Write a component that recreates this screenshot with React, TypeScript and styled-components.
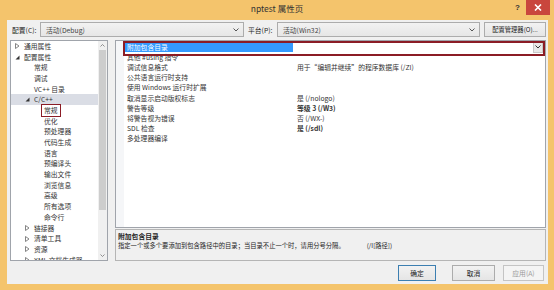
import styled, { createGlobalStyle } from 'styled-components';

const GlobalStyle = createGlobalStyle`
  html, body {
    margin: 0;
    padding: 0;
    background: #f4c46c;
  }
  body {
    font-family: "Noto Sans CJK SC", "Liberation Sans", sans-serif;
    color: #1e1e1e;
  }
`;

type TreeItem = {
  label: string;
  level: number;
  arrow?: 'open' | 'closed';
  active?: boolean;
  boxed?: boolean;
};

const TREE: TreeItem[] = [
  { label: '通用属性', level: 0, arrow: 'closed' },
  { label: '配置属性', level: 0, arrow: 'open' },
  { label: '常规', level: 1 },
  { label: '调试', level: 1 },
  { label: 'VC++ 目录', level: 1 },
  { label: 'C/C++', level: 1, arrow: 'open', active: true },
  { label: '常规', level: 2, boxed: true },
  { label: '优化', level: 2 },
  { label: '预处理器', level: 2 },
  { label: '代码生成', level: 2 },
  { label: '语言', level: 2 },
  { label: '预编译头', level: 2 },
  { label: '输出文件', level: 2 },
  { label: '浏览信息', level: 2 },
  { label: '高级', level: 2 },
  { label: '所有选项', level: 2 },
  { label: '命令行', level: 2 },
  { label: '链接器', level: 1, arrow: 'closed' },
  { label: '清单工具', level: 1, arrow: 'closed' },
  { label: '资源', level: 1, arrow: 'closed' },
  { label: 'XML 文档生成器', level: 1, arrow: 'closed' },
];

const PROPS: { name: string; value: string; bold?: boolean }[] = [
  { name: '附加包含目录', value: '' },
  { name: '其他 #using 指令', value: '' },
  { name: '调试信息格式', value: '用于“编辑并继续”的程序数据库 (/ZI)' },
  { name: '公共语言运行时支持', value: '' },
  { name: '使用 Windows 运行时扩展', value: '' },
  { name: '取消显示启动版权标志', value: '是 (/nologo)' },
  { name: '警告等级', value: '等级 3 (/W3)', bold: true },
  { name: '将警告视为错误', value: '否 (/WX-)' },
  { name: 'SDL 检查', value: '是 (/sdl)', bold: true },
  { name: '多处理器编译', value: '' },
];

function Chevron({ color = '#555' }: { color?: string }) {
  return (
    <svg width="6" height="4" viewBox="0 0 6 4">
      <path d="M0.5 0.5 L3 3 L5.5 0.5" fill="none" stroke={color} strokeWidth="1" />
    </svg>
  );
}

function TreeArrow({ kind }: { kind: 'open' | 'closed' }) {
  if (kind === 'open') {
    return (
      <svg width="5" height="5" viewBox="0 0 5 5">
        <path d="M4.5 0.5 L4.5 4.5 L0.5 4.5 Z" fill="#333" />
      </svg>
    );
  }
  return (
    <svg width="5" height="6" viewBox="0 0 5 6">
      <path d="M0.5 0.5 L4 3 L0.5 5.5 Z" fill="none" stroke="#777" strokeWidth="0.9" />
    </svg>
  );
}

export default function App() {
  return (
    <Frame>
      <GlobalStyle />
      <TitleBar>
        <span />
        <Title>nptest 属性页</Title>
        <TitleControls>
          <HelpMark>?</HelpMark>
          <CloseButton>
            <svg width="8" height="7" viewBox="0 0 8 7">
              <path d="M1 0.5 L7 6.5 M7 0.5 L1 6.5" stroke="#fff" strokeWidth="1.6" />
            </svg>
          </CloseButton>
        </TitleControls>
      </TitleBar>

      <Client>
        <ConfigRow>
          <FieldLabel $width={28}>配置(C):</FieldLabel>
          <Combo $width={204}>
            <span>活动(Debug)</span>
            <Chevron />
          </Combo>
          <FieldLabel $width={29} style={{ marginLeft: 4 }}>
            平台(P):
          </FieldLabel>
          <Combo $width={203}>
            <span>活动(Win32)</span>
            <Chevron />
          </Combo>
          <ManagerButton>配置管理器(O)...</ManagerButton>
        </ConfigRow>

        <Main>
          <TreePanel>
            <TreeList>
              {TREE.map((item, i) => (
                <TreeRow key={i} $level={item.level} $active={item.active}>
                  <ArrowSlot>{item.arrow && <TreeArrow kind={item.arrow} />}</ArrowSlot>
                  <TreeLabel $boxed={item.boxed}>{item.label}</TreeLabel>
                </TreeRow>
              ))}
            </TreeList>
            <ScrollBar>
              <ScrollArrow>
                <svg width="5" height="3" viewBox="0 0 5 3">
                  <path d="M0.5 2.5 L2.5 0.5 L4.5 2.5" fill="none" stroke="#777" strokeWidth="0.8" />
                </svg>
              </ScrollArrow>
              <ScrollTrack>
                <ScrollThumb />
              </ScrollTrack>
              <ScrollArrow>
                <svg width="5" height="3" viewBox="0 0 5 3">
                  <path d="M0.5 0.5 L2.5 2.5 L4.5 0.5" fill="none" stroke="#777" strokeWidth="0.8" />
                </svg>
              </ScrollArrow>
            </ScrollBar>
          </TreePanel>

          <RightColumn>
            <PropGrid>
              <Gutter />
              <PropRows>
                {PROPS.map((p, i) => (
                  <PropRow key={i}>
                    <PropName $selected={i === 0}>{p.name}</PropName>
                    <PropValue $bold={p.bold}>
                      {p.value}
                      {i === 0 && (
                        <DropButton>
                          <Chevron color="#333" />
                        </DropButton>
                      )}
                    </PropValue>
                  </PropRow>
                ))}
              </PropRows>
              <Highlight />
            </PropGrid>
            <DescPane>
              <DescTitle>附加包含目录</DescTitle>
              <DescText>
                <span>指定一个或多个要添加到包含路径中的目录；当目录不止一个时，请用分号分隔。</span>
                <DescSwitch>(/I[路径])</DescSwitch>
              </DescText>
            </DescPane>
          </RightColumn>
        </Main>

        <Footer>
          <DialogButton $width={38} $default>
            确定
          </DialogButton>
          <DialogButton $width={43} style={{ marginLeft: 16 }}>
            取消
          </DialogButton>
          <DialogButton $width={41} $disabled style={{ marginLeft: 8 }}>
            应用(A)
          </DialogButton>
        </Footer>
      </Client>
    </Frame>
  );
}

const Frame = styled.div`
  width: 554px;
  height: 290px;
  background: #f4c46c;
  display: flex;
  flex-direction: column;
  overflow: hidden;
`;

const TitleBar = styled.div`
  height: 20px;
  display: grid;
  grid-template-columns: 1fr auto 1fr;
  align-items: start;
`;

const Title = styled.div`
  font-size: 8.5px;
  line-height: 16px;
  color: #333;
`;

const TitleControls = styled.div`
  justify-self: end;
  display: flex;
  align-items: flex-start;
  margin-right: 4px;
`;

const HelpMark = styled.div`
  font-family: "Liberation Sans", sans-serif;
  font-size: 8px;
  font-weight: bold;
  color: #333;
  line-height: 15px;
  margin-right: 6px;
`;

const CloseButton = styled.div`
  width: 24px;
  height: 15px;
  background: #c9463d;
  display: flex;
  align-items: center;
  justify-content: center;
`;

const Client = styled.div`
  flex: 1;
  margin: 0 6px 6px 7px;
  background: #f0f0f0;
  display: flex;
  flex-direction: column;
  font-size: 6.8px;
`;

const ConfigRow = styled.div`
  height: 17px;
  margin-top: 1px;
  padding-left: 5px;
  display: flex;
  align-items: center;
`;

const FieldLabel = styled.span<{ $width: number }>`
  width: ${(p) => p.$width}px;
  flex-shrink: 0;
`;

const Combo = styled.div<{ $width: number }>`
  width: ${(p) => p.$width}px;
  height: 15px;
  box-sizing: border-box;
  border: 1px solid #acacac;
  background: linear-gradient(#f2f2f2, #e6e6e6);
  display: flex;
  align-items: center;
  justify-content: space-between;
  padding: 0 4px 0 5px;
  color: #444;
`;

const ManagerButton = styled.div`
  margin-left: 4px;
  width: 62px;
  height: 15px;
  box-sizing: border-box;
  border: 1px solid #acacac;
  background: linear-gradient(#f2f2f2, #e5e5e5);
  display: flex;
  align-items: center;
  justify-content: center;
  white-space: nowrap;
  overflow: hidden;
  font-size: 6.3px;
`;

const Main = styled.div`
  height: 221px;
  margin-top: 2px;
  display: flex;
  padding: 0 2px 0 3px;
  gap: 7px;
`;

const TreePanel = styled.div`
  width: 98px;
  box-sizing: border-box;
  border: 1px solid #a0a4ab;
  background: #fff;
  display: flex;
  overflow: hidden;
`;

const TreeList = styled.div`
  flex: 1;
  overflow: hidden;
  padding-top: 0;
`;

const TreeRow = styled.div<{ $level: number; $active?: boolean }>`
  height: 10.7px;
  display: flex;
  align-items: center;
  padding-left: ${(p) => 4 + p.$level * 10}px;
  background: ${(p) => (p.$active ? '#dadde5' : 'transparent')};
  white-space: nowrap;
  color: #333;
`;

const ArrowSlot = styled.span`
  width: 8px;
  display: flex;
  align-items: center;
  flex-shrink: 0;
`;

const TreeLabel = styled.span<{ $boxed?: boolean }>`
  line-height: 9px;
  padding: 1px 2px;
  margin-left: -2px;
  border: 1.5px solid ${(p) => (p.$boxed ? '#8b1c25' : 'transparent')};
`;

const ScrollBar = styled.div`
  width: 9px;
  background: #f0f0f0;
  display: flex;
  flex-direction: column;
`;

const ScrollArrow = styled.div`
  height: 9px;
  display: flex;
  align-items: center;
  justify-content: center;
`;

const ScrollTrack = styled.div`
  flex: 1;
  padding: 0 1px;
`;

const ScrollThumb = styled.div`
  height: 160px;
  background: #cdcdcd;
`;

const RightColumn = styled.div`
  flex: 1;
  display: flex;
  flex-direction: column;
  gap: 1px;
`;

const PropGrid = styled.div`
  position: relative;
  height: 188px;
  box-sizing: border-box;
  border: 1px solid #a0a4ab;
  background: #fff;
  display: flex;
`;

const Gutter = styled.div`
  width: 8px;
  background: #f5f6f8;
`;

const PropRows = styled.div`
  flex: 1;
  padding-top: 1px;
`;

const PropRow = styled.div`
  height: 10.1px;
  display: flex;
  align-items: center;
`;

const PropName = styled.div<{ $selected?: boolean }>`
  width: 169px;
  height: 100%;
  box-sizing: border-box;
  padding-left: 3px;
  display: flex;
  align-items: center;
  white-space: nowrap;
  background: ${(p) => (p.$selected ? '#3399ff' : 'transparent')};
  color: ${(p) => (p.$selected ? '#fff' : '#333')};
`;

const PropValue = styled.div<{ $bold?: boolean }>`
  flex: 1;
  height: 100%;
  padding-left: 4px;
  display: flex;
  align-items: center;
  white-space: nowrap;
  font-weight: ${(p) => (p.$bold ? 'bold' : 'normal')};
  color: #333;
`;

const DropButton = styled.div`
  width: 8px;
  height: 9px;
  margin-left: auto;
  margin-right: 2px;
  background: #e8e8e8;
  border: 1px solid #c8c8c8;
  display: flex;
  align-items: center;
  justify-content: center;
`;

const Highlight = styled.div`
  position: absolute;
  left: 7px;
  right: 0;
  top: 0;
  height: 15px;
  box-sizing: border-box;
  border: 2px solid #8b1c25;
  pointer-events: none;
`;

const DescPane = styled.div`
  flex: 1;
  box-sizing: border-box;
  border: 1px solid #b5b5b5;
  background: #f0f0f0;
  padding: 1px 2px;
`;

const DescTitle = styled.div`
  font-weight: bold;
  line-height: 10px;
`;

const DescText = styled.div`
  display: flex;
  line-height: 10px;
  font-size: 6.3px;
  white-space: nowrap;
`;

const DescSwitch = styled.span`
  margin-left: 22px;
`;

const Footer = styled.div`
  flex: 1;
  display: flex;
  align-items: center;
  padding-left: 391px;
`;

const DialogButton = styled.div<{ $width: number; $default?: boolean; $disabled?: boolean }>`
  width: ${(p) => p.$width}px;
  height: 16px;
  box-sizing: border-box;
  border: 1px solid ${(p) => (p.$default ? '#3c7fb1' : p.$disabled ? '#c4c4c4' : '#acacac')};
  background: ${(p) => (p.$disabled ? '#f4f4f4' : 'linear-gradient(#f2f2f2, #e5e5e5)')};
  color: ${(p) => (p.$disabled ? '#9a9a9a' : '#222')};
  display: flex;
  align-items: center;
  justify-content: center;
`;
